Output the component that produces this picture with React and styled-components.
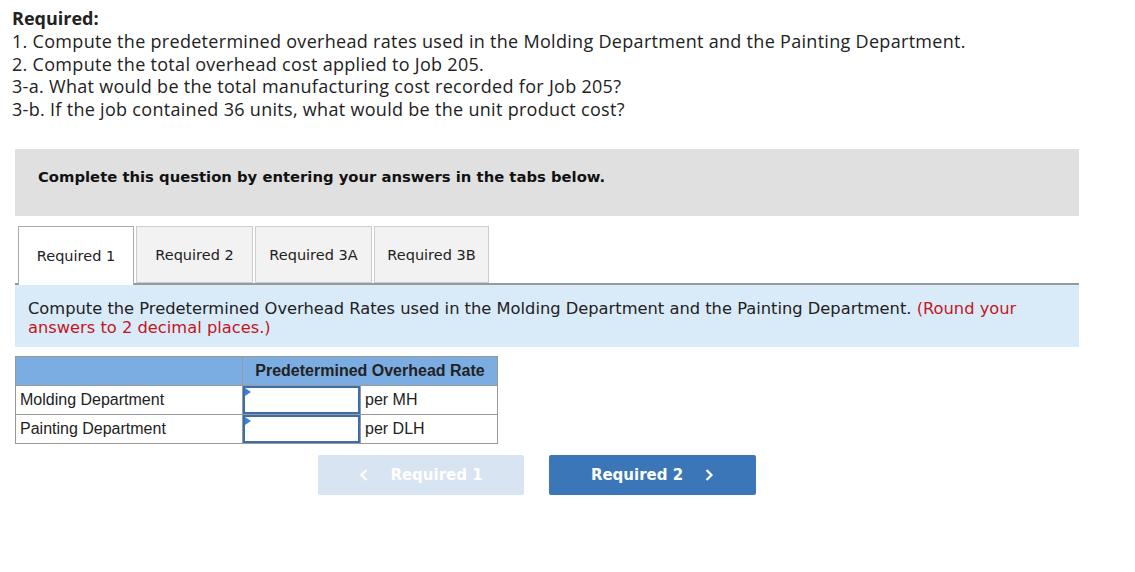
import React from 'react';
import styled, {createGlobalStyle} from 'styled-components';

const GlobalStyle = createGlobalStyle`
    html, body {
        margin: 0;
        padding: 0;
        background: #fff;
    }
    body {
        font-family: "Liberation Sans", Arial, sans-serif;
        color: #000;
    }
`;

const Page = styled.div`
    width: 1135px;
    height: 572px;
    box-sizing: border-box;
    padding: 7px 56px 0 12px;
    overflow: hidden;
`;

const Question = styled.div`
    font-family: "Open Sans", Lato, sans-serif;
    font-size: 18px;
    letter-spacing: 0.3px;
    line-height: 22.75px;
    color: #222;
`;

const QuestionTitle = styled.div`
    font-weight: 700;
    letter-spacing: 0;
`;

const Body = styled.div`
    margin: 28px 0 0 3px;
`;

const Banner = styled.div`
    background: #e0e0e0;
    height: 67px;
    box-sizing: border-box;
    padding: 19px 0 0 23px;
    font-family: "DejaVu Sans", Verdana, sans-serif;
    font-size: 14.8px;
    font-weight: 700;
    line-height: 18px;
    color: #111;
`;

const TabBar = styled.div`
    display: flex;
    align-items: flex-end;
    gap: 2px;
    margin-top: 10px;
    padding-left: 3px;
    border-bottom: 2px solid #999;
    height: 57px;
`;

const Tab = styled.div`
    box-sizing: border-box;
    width: ${p => p.$w}px;
    height: ${p => (p.$active ? 59 : 57)}px;
    margin-bottom: ${p => (p.$active ? -2 : 0)}px;
    display: flex;
    align-items: center;
    justify-content: center;
    background: ${p => (p.$active ? '#fff' : '#f2f2f2')};
    border: 1px solid ${p => (p.$active ? '#aaa' : '#ccc')};
    border-bottom: ${p => (p.$active ? 'none' : '1px solid #ccc')};
    font-family: "DejaVu Sans", Verdana, sans-serif;
    font-size: 14.5px;
    color: #222;
    padding-top: ${p => (p.$active ? 0 : 2)}px;
`;

const Instruction = styled.div`
    background: #d9ebf9;
    padding: 14px 13px 10px;
    font-family: "DejaVu Sans", Verdana, sans-serif;
    font-size: 16.3px;
    line-height: 19px;
    color: #222;
`;

const Red = styled.span`
    color: #c4161c;
`;

const Table = styled.table`
    margin-top: 9px;
    border-collapse: collapse;
    font-family: "Liberation Sans", Arial, sans-serif;
    font-size: 16px;
    color: #222;
`;

const HeadCell = styled.th`
    background: #7badE3;
    border: 1px solid #999;
    height: 28px;
    padding: 0 8px;
    font-weight: 700;
    text-align: center;
`;

const Cell = styled.td`
    border: 1px solid #999;
    height: 28px;
    padding: 0 4px;
    width: ${p => p.$w || 'auto'};
`;

const InputCell = styled.td`
    border: 1px solid #999;
    padding: 0;
    height: 28px;
    width: 117px;
`;

const InputBox = styled.div`
    position: relative;
    box-sizing: border-box;
    height: 28px;
    border: 2px solid #3c6ea8;
    background: #fff;

    &::before {
        content: '';
        position: absolute;
        left: 0;
        top: 0;
        border-left: 6px solid #3b82d6;
        border-top: 4px solid transparent;
        border-bottom: 4px solid transparent;
    }
`;

const Nav = styled.div`
    display: flex;
    gap: 25px;
    margin: 11px 0 0 303px;
`;

const NavButton = styled.div`
    width: ${p => (p.$next ? 207 : 206)}px;
    height: 40px;
    border-radius: 2px;
    display: flex;
    align-items: center;
    justify-content: center;
    gap: 21px;
    background: ${p => (p.$disabled ? '#d8e4f1' : '#3a76b8')};
    color: #fff;
    font-family: "DejaVu Sans", Verdana, sans-serif;
    font-size: 15px;
    font-weight: 700;
`;

const Chevron = ({dir}) => (
    <svg width="10" height="14" viewBox="0 0 10 14">
        <path
            d={dir === 'left' ? 'M7.5 2 L2.5 7 L7.5 12' : 'M2.5 2 L7.5 7 L2.5 12'}
            fill="none"
            stroke="#fff"
            strokeWidth="2.2"
        />
    </svg>
);

const tabs = [
    {label: 'Required 1', w: 116, active: true},
    {label: 'Required 2', w: 117},
    {label: 'Required 3A', w: 117},
    {label: 'Required 3B', w: 115},
];

export default function App() {
    return <>
        <GlobalStyle/>
        <Page>
            <Question>
                <QuestionTitle>Required:</QuestionTitle>
                <div>1. Compute the predetermined overhead rates used in the Molding Department and the Painting Department.</div>
                <div>2. Compute the total overhead cost applied to Job 205.</div>
                <div>3-a. What would be the total manufacturing cost recorded for Job 205?</div>
                <div>3-b. If the job contained 36 units, what would be the unit product cost?</div>
            </Question>
            <Body>
                <Banner>Complete this question by entering your answers in the tabs below.</Banner>
                <TabBar>
                    {tabs.map(t =>
                        <Tab key={t.label} $w={t.w} $active={t.active}>{t.label}</Tab>
                    )}
                </TabBar>
                <Instruction>
                    Compute the Predetermined Overhead Rates used in the Molding Department and the Painting Department. <Red>(Round your answers to 2 decimal places.)</Red>
                </Instruction>
                <Table>
                    <thead>
                    <tr>
                        <HeadCell/>
                        <HeadCell colSpan={2}>Predetermined Overhead Rate</HeadCell>
                    </tr>
                    </thead>
                    <tbody>
                    <tr>
                        <Cell $w="218px">Molding Department</Cell>
                        <InputCell><InputBox/></InputCell>
                        <Cell $w="128px">per MH</Cell>
                    </tr>
                    <tr>
                        <Cell>Painting Department</Cell>
                        <InputCell><InputBox/></InputCell>
                        <Cell>per DLH</Cell>
                    </tr>
                    </tbody>
                </Table>
                <Nav>
                    <NavButton $disabled><Chevron dir="left"/>Required 1</NavButton>
                    <NavButton $next>Required 2<Chevron dir="right"/></NavButton>
                </Nav>
            </Body>
        </Page>
    </>;
}
